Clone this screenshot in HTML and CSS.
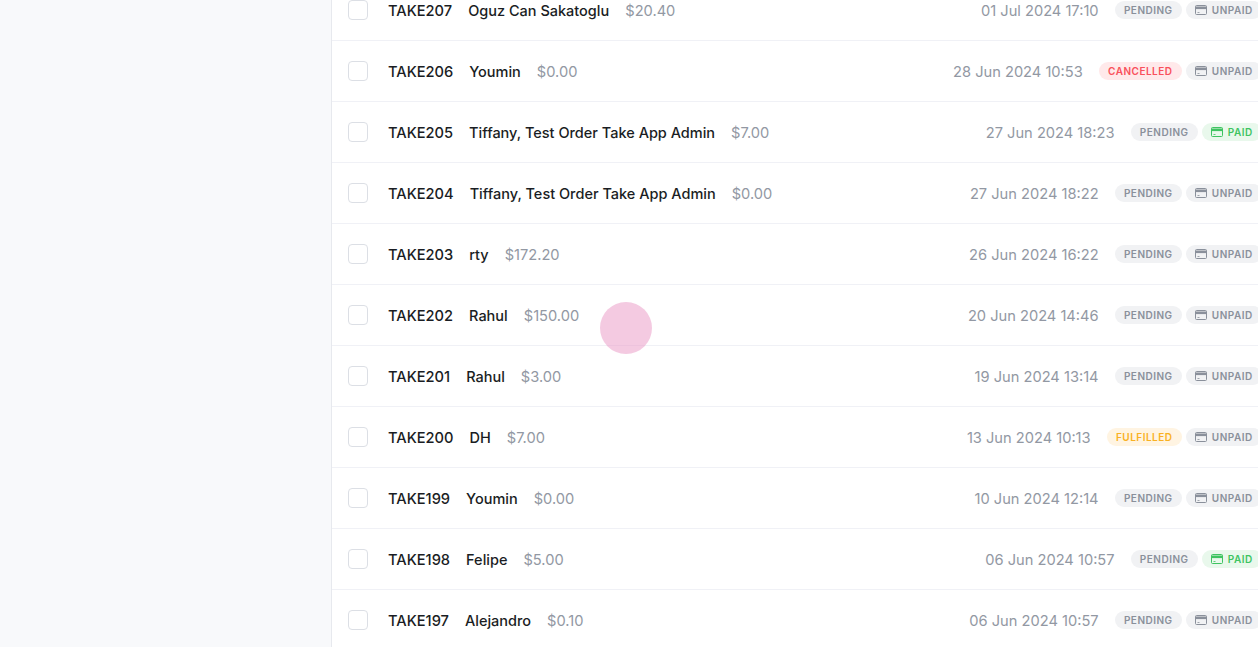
FILE: index.html
```html
<!DOCTYPE html>
<html lang="en">
<head>
<meta charset="utf-8">
<title>Orders</title>
<link rel="stylesheet" href="styles.css">
</head>
<body>
<svg class="defs" width="0" height="0" aria-hidden="true"><defs>
<symbol id="card" viewBox="0 0 12 12"><path d="M1.5 1.5h9a1 1 0 0 1 1 1v7a1 1 0 0 1-1 1h-9a1 1 0 0 1-1-1v-7a1 1 0 0 1 1-1z" fill="none" stroke="currentColor"/><path d="M.5 2.5h11v2.6H.5z" fill="currentColor"/><path d="M2.5 8.5h2" stroke="currentColor" stroke-width=".8"/></symbol>
</defs></svg>
<div class="page">
<aside class="sidebar"></aside>
<main class="main">
<ul class="list">
<li class="row"><span class="check"></span><span class="id">TAKE207</span><span class="name">Oguz Can Sakatoglu</span><span class="price">$20.40</span><span class="date">01 Jul 2024 17:10</span><span class="badge pending">PENDING</span><span class="badge unpaid"><svg class="ico"><use href="#card"/></svg>UNPAID</span></li>
<li class="row"><span class="check"></span><span class="id">TAKE206</span><span class="name">Youmin</span><span class="price">$0.00</span><span class="date">28 Jun 2024 10:53</span><span class="badge cancelled">CANCELLED</span><span class="badge unpaid"><svg class="ico"><use href="#card"/></svg>UNPAID</span></li>
<li class="row"><span class="check"></span><span class="id">TAKE205</span><span class="name">Tiffany, Test Order Take App Admin</span><span class="price">$7.00</span><span class="date">27 Jun 2024 18:23</span><span class="badge pending">PENDING</span><span class="badge paid"><svg class="ico"><use href="#card"/></svg>PAID</span></li>
<li class="row"><span class="check"></span><span class="id">TAKE204</span><span class="name">Tiffany, Test Order Take App Admin</span><span class="price">$0.00</span><span class="date">27 Jun 2024 18:22</span><span class="badge pending">PENDING</span><span class="badge unpaid"><svg class="ico"><use href="#card"/></svg>UNPAID</span></li>
<li class="row"><span class="check"></span><span class="id">TAKE203</span><span class="name">rty</span><span class="price">$172.20</span><span class="date">26 Jun 2024 16:22</span><span class="badge pending">PENDING</span><span class="badge unpaid"><svg class="ico"><use href="#card"/></svg>UNPAID</span></li>
<li class="row"><span class="check"></span><span class="id">TAKE202</span><span class="name">Rahul</span><span class="price">$150.00</span><span class="date">20 Jun 2024 14:46</span><span class="badge pending">PENDING</span><span class="badge unpaid"><svg class="ico"><use href="#card"/></svg>UNPAID</span></li>
<li class="row"><span class="check"></span><span class="id">TAKE201</span><span class="name">Rahul</span><span class="price">$3.00</span><span class="date">19 Jun 2024 13:14</span><span class="badge pending">PENDING</span><span class="badge unpaid"><svg class="ico"><use href="#card"/></svg>UNPAID</span></li>
<li class="row"><span class="check"></span><span class="id">TAKE200</span><span class="name">DH</span><span class="price">$7.00</span><span class="date">13 Jun 2024 10:13</span><span class="badge fulfilled">FULFILLED</span><span class="badge unpaid"><svg class="ico"><use href="#card"/></svg>UNPAID</span></li>
<li class="row"><span class="check"></span><span class="id">TAKE199</span><span class="name">Youmin</span><span class="price">$0.00</span><span class="date">10 Jun 2024 12:14</span><span class="badge pending">PENDING</span><span class="badge unpaid"><svg class="ico"><use href="#card"/></svg>UNPAID</span></li>
<li class="row"><span class="check"></span><span class="id">TAKE198</span><span class="name">Felipe</span><span class="price">$5.00</span><span class="date">06 Jun 2024 10:57</span><span class="badge pending">PENDING</span><span class="badge paid"><svg class="ico"><use href="#card"/></svg>PAID</span></li>
<li class="row"><span class="check"></span><span class="id">TAKE197</span><span class="name">Alejandro</span><span class="price">$0.10</span><span class="date">06 Jun 2024 10:57</span><span class="badge pending">PENDING</span><span class="badge unpaid"><svg class="ico"><use href="#card"/></svg>UNPAID</span></li>
</ul>
</main>
</div>
<div class="cursor"></div>
</body>
</html>
```
FILE: styles.css
```css
* { box-sizing: border-box; }
html, body { margin: 0; height: 100%; overflow: hidden; background: #fff; }
body { font-family: Inter, "Liberation Sans", sans-serif; }
.defs { position: absolute; }
.page { display: flex; height: 647px; overflow: hidden; }
.sidebar { width: 332px; flex: none; background: #f8f9fb; border-right: 1px solid #e7e9ee; }
.main { flex: 1; min-width: 0; overflow: hidden; background: #fff; }
.list { list-style: none; margin: -20px 0 0; padding: 0; width: 930px; }
.row { display: flex; align-items: center; height: 61px; padding: 0 0 0 16px; border-bottom: 1px solid #f0f1f6; font-size: 14.65px; line-height: 20px; }
.check { width: 20px; height: 20px; flex: none; margin-right: 20px; background: #fff; border: 1.5px solid #dcdfe5; border-radius: 4px; }
.id, .name, .price, .date { padding-top: 2px; }
.id { font-weight: 500; color: #1a1d23; margin-right: 16px; }
.name { font-weight: 500; font-size: 14.5px; color: #1a1d23; margin-right: 16px; }
.price { color: #9298a3; }
.date { margin-left: auto; margin-right: 16px; color: #9298a3; }
.badge { display: inline-flex; align-items: center; height: 18px; padding: 0 9.3px; margin-left: 4px; border-radius: 9px; font-size: 10px; font-weight: 600; letter-spacing: 0.5px; flex: none; }
.date + .badge { margin-left: 0; }
.ico { width: 12px; height: 12px; margin-right: 4.7px; flex: none; }
.pending, .unpaid { background: #f1f2f4; color: #8a909b; }
.paid { background: #e9f8ec; color: #3ec461; }
.cancelled { background: #ffe9ea; color: #f9505b; }
.fulfilled { background: #fff4e2; color: #f9b122; }
.cursor { position: absolute; left: 600px; top: 301.5px; width: 52px; height: 52px; border-radius: 50%; background: rgba(233, 150, 195, 0.5); }
```
